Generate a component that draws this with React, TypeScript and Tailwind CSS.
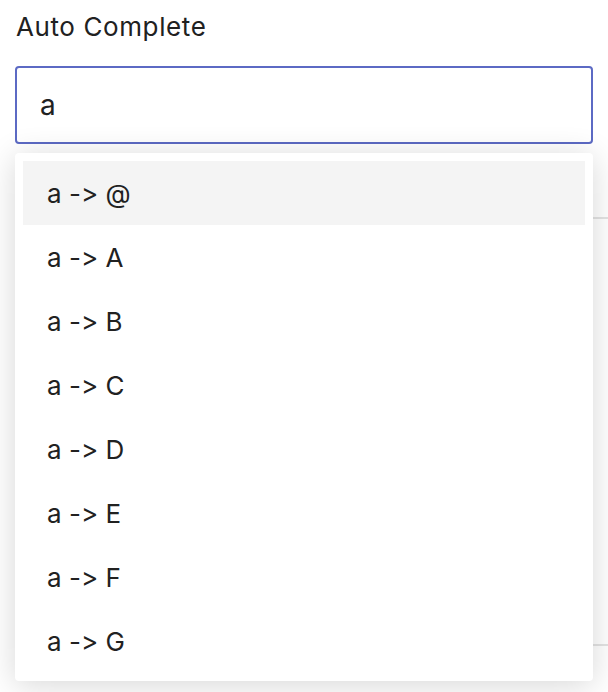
import React, { useState } from 'react';

const options = ['@', 'A', 'B', 'C', 'D', 'E', 'F', 'G'];

const App: React.FC = () => {
  const [value, setValue] = useState('a');
  const [active, setActive] = useState(0);

  return (
    <div className="min-h-screen bg-white font-['Inter','Noto_Sans',sans-serif] text-[#212121] [font-feature-settings:'calt'_0,'liga'_0]">
      <div className="relative px-[15px] pt-[11px]">
        <label className="block pl-[1px] text-[26px] leading-[32px] tracking-[0.6px] text-[#212121]">Auto Complete</label>
        <input
          value={value}
          onChange={(e) => setValue(e.target.value)}
          className="mt-[23px] block h-[78px] w-full rounded-[4px] border-2 border-[#5c6ac4] bg-white px-[23px] text-[28px] text-[#212121] outline-none"
        />

        {/* content behind the open list */}
        <div className="mt-[73px] ml-[20px] -mr-[15px] border-t-2 border-[#e3e3e3]" />
        <div className="mt-[425px] ml-[20px] -mr-[15px] border-t-2 border-[#e3e3e3]" />

        <ul className="absolute left-[15px] right-[15px] top-[153px] rounded-[4px] bg-white p-2 shadow-[0_4px_32px_rgba(0,0,0,0.16)]">
          {options.map((opt, i) => (
            <li
              key={opt}
              onMouseEnter={() => setActive(i)}
              className={`flex h-16 items-center px-6 text-[26px] ${
                active === i ? 'bg-[#f4f4f4]' : 'bg-white'
              }`}
            >
              {value} -&gt; {opt}
            </li>
          ))}
        </ul>
      </div>
    </div>
  );
};

export default App;
